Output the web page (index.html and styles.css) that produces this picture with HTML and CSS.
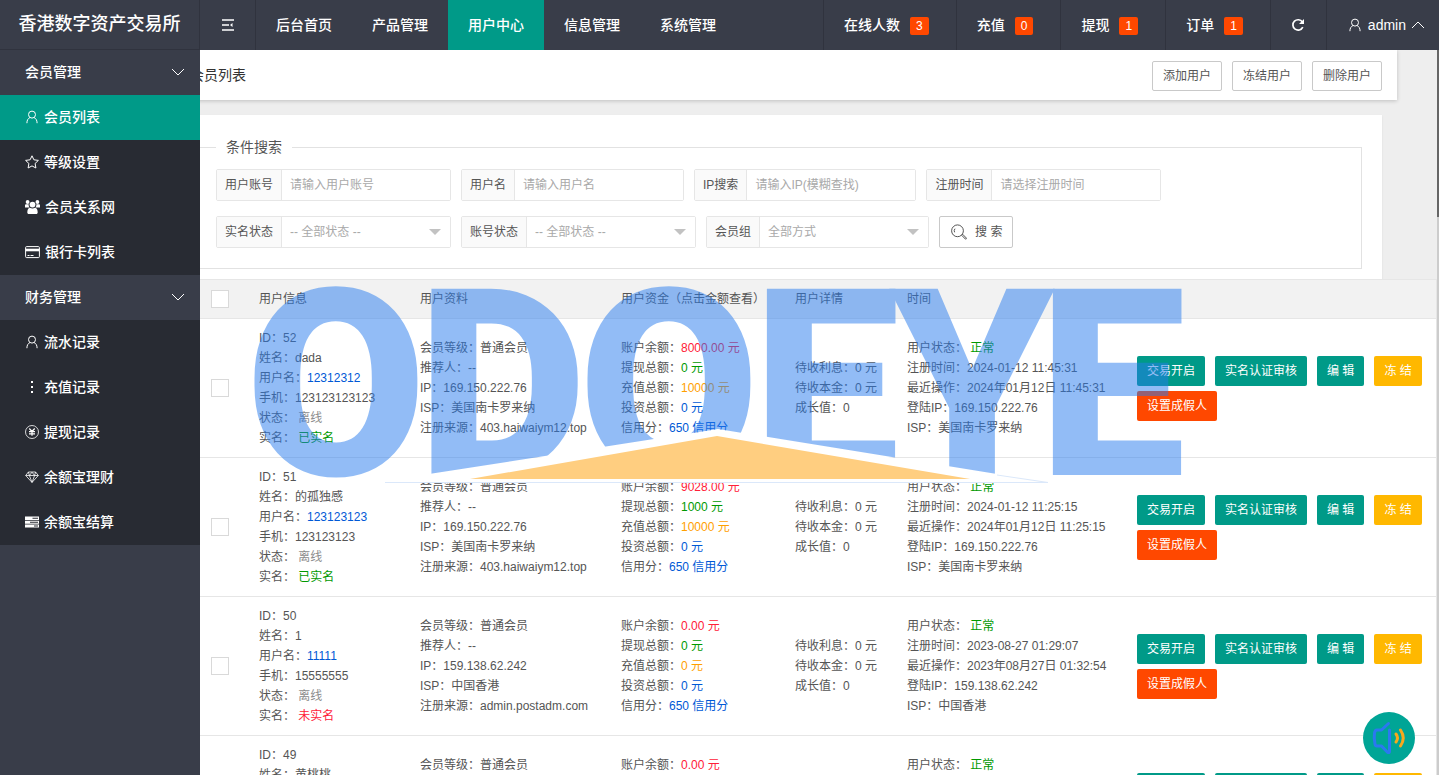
FILE: index.html
```html
<!DOCTYPE html>
<html lang="zh-CN">
<head>
<meta charset="utf-8">
<title>会员列表</title>
<link rel="stylesheet" href="styles.css">
</head>
<body>
<div class="app">
  <header class="topbar">
    <div class="brand">香港数字资产交易所</div>
    <button class="fold" type="button" aria-label="折叠菜单">
      <svg class="icon" width="14" height="14" viewBox="0 0 14 14"><path d="M1 2h12M1 7h7M1 12h12" stroke-width="1.400"/><path d="M9 7l2.500-2v4z" fill="currentColor" stroke="none"/></svg>
    </button>
    <nav class="mainnav">
      <a href="#">后台首页</a><a href="#">产品管理</a><a href="#" class="on">用户中心</a><a href="#">信息管理</a><a href="#">系统管理</a>
    </nav>
    <nav class="stats">
      <a href="#">在线人数<span class="badge">3</span></a>
      <a href="#">充值<span class="badge">0</span></a>
      <a href="#">提现<span class="badge">1</span></a>
      <a href="#">订单<span class="badge">1</span></a>
      <button class="refresh" type="button" aria-label="刷新">
        <svg class="icon" width="14" height="14" viewBox="0 0 14 14"><path d="M11.8 9.2A5.2 5.2 0 1 1 11.4 4" stroke-width="1.7"/><path d="M13 1v5H8z" fill="currentColor" stroke="none"/></svg>
      </button>
      <button class="account" type="button">
        <svg class="icon" width="14" height="14" viewBox="0 0 14 14"><circle cx="7" cy="4.6" r="3.5"/><path d="M1.9 13.2c0-3 1.2-4.800 3-5.600M12.100 13.200c0-3-1.200-4.800-3-5.600"/></svg>
        <span>admin</span>
        <svg class="icon" width="12" height="8" viewBox="0 0 12 8"><path d="M0 7l6-6 6 6"/></svg>
      </button>
    </nav>
  </header>

  <div class="body">
    <aside class="side">
      <button class="group" type="button">会员管理<svg class="icon" width="12" height="8" viewBox="0 0 12 8"><path d="M0 1l6 6 6-6"/></svg></button>
      <ul class="menu">
        <li><a href="#" class="on"><svg class="icon" width="14" height="14" viewBox="0 0 14 14"><circle cx="7" cy="4.600" r="3.500"/><path d="M1.900 13.200c0-3 1.200-4.800 3-5.600M12.100 13.200c0-3-1.200-4.800-3-5.600"/></svg>会员列表</a></li>
        <li><a href="#"><svg class="icon" width="14" height="14" viewBox="0 0 14 14"><path d="M7 .8l1.900 4 4.500.6-3.300 3.100.8 4.500L7 10.900 3.100 13l.8-4.500L.6 5.400l4.500-.6z"/></svg>等级设置</a></li>
        <li><a href="#"><svg class="icon solid" width="15" height="14" viewBox="0 0 15 14"><circle cx="2.600" cy="2" r="1.900"/><circle cx="12.400" cy="2" r="1.900"/><circle cx="7.500" cy="4.600" r="2.900"/><path d="M0 7.500V5.200q0-1 1-1h2.600q-.2 2 .9 3.300zM15 7.500V5.200q0-1-1-1h-2.600q.2 2-.9 3.300zM2.300 12.500c0-2.800.8-4.600 2.600-4.800 1.600 1 3.600 1 5.200 0 1.800.2 2.600 2 2.600 4.800 0 .9-.6 1.500-1.500 1.500H3.800c-.9 0-1.500-.6-1.500-1.500z"/></svg>会员关系网</a></li>
        <li><a href="#"><svg class="icon" width="15" height="14" viewBox="0 0 15 14"><rect x=".6" y="1.600" width="13.800" height="11" rx="1"/><path d="M.6 5h13.800" stroke-width="2.600"/><path d="M2.500 10.500h2M5.500 10.500h3"/></svg>银行卡列表</a></li>
      </ul>
      <button class="group" type="button">财务管理<svg class="icon" width="12" height="8" viewBox="0 0 12 8"><path d="M0 1l6 6 6-6"/></svg></button>
      <ul class="menu">
        <li><a href="#"><svg class="icon" width="14" height="14" viewBox="0 0 14 14"><circle cx="7" cy="4.600" r="3.500"/><path d="M1.900 13.200c0-3 1.200-4.800 3-5.600M12.100 13.200c0-3-1.200-4.800-3-5.600"/></svg>流水记录</a></li>
        <li><a href="#"><svg class="icon solid" width="14" height="14" viewBox="0 0 14 14"><path d="M6 1h2v2H6zM6 6h2v2H6zM6 11h2v2H6z"/></svg>充值记录</a></li>
        <li><a href="#"><svg class="icon thin" width="14" height="14" viewBox="0 0 14 14"><circle cx="7" cy="7" r="6.500"/><path d="M4.300 3.500L7 6.500l2.700-3M7 6.500v4.300M4 6.700h6M4 8.800h6" stroke-width="1.200"/></svg>提现记录</a></li>
        <li><a href="#"><svg class="icon thin" width="14" height="14" viewBox="0 0 14 14"><path d="M3.400 2h7.200L13.300 5.500 7 12.400.7 5.500zM.7 5.500h12.600M3.400 2l1 3.500L7 12.400l2.600-6.900 1-3.500M4.400 5.500L7 2.200l2.600 3.300"/></svg>余额宝理财</a></li>
        <li><a href="#"><svg class="icon solid" width="14" height="14" viewBox="0 0 14 14"><path fill-rule="evenodd" d="M0 1.500h14V5H0zM7.500 2.700v1H13v-1zM0 5.700h14v3H0zM5 6.700v1h8v-1zM0 9.400h14v3.100H0zM9 10.500v1h4v-1z"/></svg>余额宝结算</a></li>
      </ul>
    </aside>

    <main class="frame">
      <div class="page">
        <div class="titlebar">
          <h1>会员列表</h1>
          <div class="actions">
            <button class="btn plain" type="button">添加用户</button>
            <button class="btn plain" type="button">冻结用户</button>
            <button class="btn plain" type="button">删除用户</button>
          </div>
        </div>

        <section class="card">
          <fieldset class="search">
            <legend>条件搜索</legend>
            <div class="fields">
              <div class="field"><label for="acc">用户账号</label><input id="acc" type="text" placeholder="请输入用户账号"></div>
              <div class="field"><label for="name">用户名</label><input id="name" type="text" placeholder="请输入用户名"></div>
              <div class="field"><label for="ip">IP搜索</label><input id="ip" type="text" placeholder="请输入IP(模糊查找)"></div>
              <div class="field"><label for="time">注册时间</label><input id="time" type="text" placeholder="请选择注册时间"></div>
            </div>
            <div class="fields">
              <div class="field drop"><label for="real">实名状态</label><select id="real"><option>-- 全部状态 --</option></select></div>
              <div class="field drop"><label for="state">账号状态</label><select id="state"><option>-- 全部状态 --</option></select></div>
              <div class="field drop"><label for="team">会员组</label><select id="team"><option>全部方式</option></select></div>
              <button class="btn plain find" type="button"><svg class="icon" width="16" height="16" viewBox="0 0 16 16"><circle cx="6.500" cy="6.800" r="5.900"/><path d="M3.600 8.300a3.300 3.300 0 0 1 .4-3.600"/><path d="M10.700 11.300l1-1 3.600 3.700q.3 1-.8 1.200z"/></svg>搜 索</button>
            </div>
          </fieldset>
        </section>

        <table class="list">
          <colgroup><col class="c0"><col class="c1"><col class="c2"><col class="c3"><col class="c4"><col class="c5"><col></colgroup>
          <thead>
            <tr><th><input type="checkbox" aria-label="全选"></th><th>用户信息</th><th>用户资料</th><th>用户资金（点击金额查看）</th><th>用户详情</th><th>时间</th><th></th></tr>
          </thead>
          <tbody>
            <tr>
              <td><input type="checkbox" aria-label="选择 52"></td>
              <td><p>ID：52</p><p>姓名：dada</p><p>用户名：<a href="#">12312312</a></p><p>手机：123123123123</p><p>状态： <span class="gray">离线</span></p><p>实名： <span class="green">已实名</span></p></td>
              <td><p>会员等级：普通会员</p><p>推荐人：--</p><p>IP：169.150.222.76</p><p>ISP：美国南卡罗来纳</p><p>注册来源：403.haiwaiym12.top</p></td>
              <td><p>账户余额：<span class="red">8000.00 元</span></p><p>提现总额：<span class="green">0 元</span></p><p>充值总额：<span class="orange">10000 元</span></p><p>投资总额：<span class="blue">0 元</span></p><p>信用分：<span class="blue">650 信用分</span></p></td>
              <td><p>待收利息：0 元</p><p>待收本金：0 元</p><p>成长值：0</p></td>
              <td><p>用户状态： <span class="green">正常</span></p><p>注册时间：2024-01-12 11:45:31</p><p>最近操作：2024年01月12日 11:45:31</p><p>登陆IP：169.150.222.76</p><p>ISP：美国南卡罗来纳</p></td>
              <td><div class="ops"><button class="btn" type="button">交易开启</button><button class="btn" type="button">实名认证审核</button><button class="btn" type="button">编 辑</button><button class="btn warm" type="button">冻 结</button><button class="btn danger" type="button">设置成假人</button></div></td>
            </tr>
            <tr>
              <td><input type="checkbox" aria-label="选择 51"></td>
              <td><p>ID：51</p><p>姓名：的孤独感</p><p>用户名：<a href="#">123123123</a></p><p>手机：123123123</p><p>状态： <span class="gray">离线</span></p><p>实名： <span class="green">已实名</span></p></td>
              <td><p>会员等级：普通会员</p><p>推荐人：--</p><p>IP：169.150.222.76</p><p>ISP：美国南卡罗来纳</p><p>注册来源：403.haiwaiym12.top</p></td>
              <td><p>账户余额：<span class="red">9028.00 元</span></p><p>提现总额：<span class="green">1000 元</span></p><p>充值总额：<span class="orange">10000 元</span></p><p>投资总额：<span class="blue">0 元</span></p><p>信用分：<span class="blue">650 信用分</span></p></td>
              <td><p>待收利息：0 元</p><p>待收本金：0 元</p><p>成长值：0</p></td>
              <td><p>用户状态： <span class="green">正常</span></p><p>注册时间：2024-01-12 11:25:15</p><p>最近操作：2024年01月12日 11:25:15</p><p>登陆IP：169.150.222.76</p><p>ISP：美国南卡罗来纳</p></td>
              <td><div class="ops"><button class="btn" type="button">交易开启</button><button class="btn" type="button">实名认证审核</button><button class="btn" type="button">编 辑</button><button class="btn warm" type="button">冻 结</button><button class="btn danger" type="button">设置成假人</button></div></td>
            </tr>
            <tr>
              <td><input type="checkbox" aria-label="选择 50"></td>
              <td><p>ID：50</p><p>姓名：1</p><p>用户名：<a href="#">11111</a></p><p>手机：15555555</p><p>状态： <span class="gray">离线</span></p><p>实名： <span class="red">未实名</span></p></td>
              <td><p>会员等级：普通会员</p><p>推荐人：--</p><p>IP：159.138.62.242</p><p>ISP：中国香港</p><p>注册来源：admin.postadm.com</p></td>
              <td><p>账户余额：<span class="red">0.00 元</span></p><p>提现总额：<span class="green">0 元</span></p><p>充值总额：<span class="orange">0 元</span></p><p>投资总额：<span class="blue">0 元</span></p><p>信用分：<span class="blue">650 信用分</span></p></td>
              <td><p>待收利息：0 元</p><p>待收本金：0 元</p><p>成长值：0</p></td>
              <td><p>用户状态： <span class="green">正常</span></p><p>注册时间：2023-08-27 01:29:07</p><p>最近操作：2023年08月27日 01:32:54</p><p>登陆IP：159.138.62.242</p><p>ISP：中国香港</p></td>
              <td><div class="ops"><button class="btn" type="button">交易开启</button><button class="btn" type="button">实名认证审核</button><button class="btn" type="button">编 辑</button><button class="btn warm" type="button">冻 结</button><button class="btn danger" type="button">设置成假人</button></div></td>
            </tr>
            <tr>
              <td><input type="checkbox" aria-label="选择 49"></td>
              <td><p>ID：49</p><p>姓名：黄桃桃</p><p>用户名：--</p><p>手机：--</p><p>状态：--</p><p>实名：--</p></td>
              <td><p>会员等级：普通会员</p><p>推荐人：--</p><p>IP：--</p><p>ISP：--</p><p>注册来源：--</p></td>
              <td><p>账户余额：<span class="red">0.00 元</span></p><p>提现总额：--</p><p>充值总额：--</p><p>投资总额：--</p><p>信用分：--</p></td>
              <td><p>待收利息：--</p><p>待收本金：--</p><p>成长值：--</p></td>
              <td><p>用户状态： <span class="green">正常</span></p><p>注册时间：--</p><p>最近操作：--</p><p>登陆IP：--</p><p>ISP：--</p></td>
              <td><div class="ops"><button class="btn" type="button">交易开启</button><button class="btn" type="button">实名认证审核</button><button class="btn" type="button">编 辑</button><button class="btn warm" type="button">冻 结</button><button class="btn danger" type="button">设置成假人</button></div></td>
            </tr>
          </tbody>
        </table>
      </div>

      <svg class="watermark" width="940" height="210" viewBox="250 280 940 210" aria-label="ODOEYE">
        <defs><clipPath id="roofline"><path d="M250 280H1190V490H1049L997 474 718 429 429 474 420 490H250z"/></clipPath></defs>
        <path d="M429 475L718 429 997 475 1048 482H385z" fill="#fff"/>
        <path d="M385 482.500H1048L997 475" fill="none" stroke="#dbe8fa"/>
        <path d="M470 479L717 436 970 479z" fill="#ffce80"/>
        <g opacity=".5" clip-path="url(#roofline)">
          <text class="mark" y="475" x="336 502 669 826 972 1112">ODOEYE</text>
        </g>
      </svg>
    </main>
    <div class="scroll"><div class="thumb"></div></div>
  </div>

  <button class="sound" type="button" aria-label="提示音">
    <svg width="34" height="34" viewBox="0 0 34 34" fill="none" stroke-width="3" stroke-linecap="round" stroke-linejoin="round"><path d="M16.500 2.500L9.500 9H5q-2 0-2.500 3-.8 5 .5 11 .3 2 2 2h4.500l6 6.200q2 1.200 2-1V9" stroke="#2b78f0"/><path d="M24 13q3 4 0 8" stroke="#f8a81c"/><path d="M28.500 9q5.500 8 0 16" stroke="#f8a81c"/></svg>
  </button>
</div>
</body>
</html>
```
FILE: styles.css
```css
* { box-sizing: border-box; }
body, h1, p, ul { margin: 0; padding: 0; }
ul { list-style: none; }
a { text-decoration: none; color: inherit; }
button, input, select { font: inherit; color: inherit; margin: 0; }
button { border: 0; background: none; padding: 0; cursor: pointer; }

body {
  font: 14px/20px "Liberation Sans", "Noto Sans CJK SC", sans-serif;
  color: #555;
  overflow: hidden;
}
.icon { fill: none; stroke: currentColor; flex: none; }
.icon.solid { fill: currentColor; stroke: none; }
.icon.thin { stroke-width: .8; }

.app { height: 100vh; display: flex; flex-direction: column; }

.topbar {
  display: flex;
  flex: none;
  height: 50px;
  background: #393d49;
  color: #fff;
  font-weight: 500;
}
.brand {
  width: 200px;
  text-align: center;
  font-size: 18px;
  line-height: 49px;
  border-right: 1px solid #30333e;
  border-bottom: 1px solid #30333e;
}
.fold { width: 56px; border-right: 1px solid #30333e; }
.fold svg, .refresh svg { display: block; margin: auto; }
.mainnav { display: flex; flex: 1; }
.mainnav a { padding: 0 20px; line-height: 50px; }
.mainnav .on { background: #009a88; }
.stats { display: flex; }
.stats a {
  display: flex;
  align-items: center;
  gap: 10px;
  padding: 0 27px 0 20px;
  border-left: 1px solid #30333e;
}
.badge {
  padding: 0 6px;
  margin-top: 2px;
  font-size: 12px;
  line-height: 18px;
  background: #ff4800;
  border-radius: 2px;
}
.refresh { width: 56px; border-left: 1px solid #30333e; }
.account {
  display: flex;
  align-items: center;
  gap: 6px;
  padding: 0 15px 0 21px;
  border-left: 1px solid #30333e;
}

.body { flex: 1; min-height: 0; display: flex; }
.side { width: 200px; flex: none; background: #393d49; color: #fff; font-weight: 500; }
.group {
  display: flex;
  align-items: center;
  justify-content: space-between;
  width: 100%;
  height: 45px;
  padding: 0 16px 2px 25px;
}
.menu { background: #282b33; }
.menu a { display: flex; align-items: center; gap: 5px; height: 45px; padding: 0 0 2px 25px; }
.menu .on { background: #009a88; }

.frame { flex: 1; min-width: 0; overflow: hidden; position: relative; background: #eee; }
.page { margin-left: -25px; }
.titlebar {
  display: flex;
  align-items: center;
  justify-content: space-between;
  height: 50px;
  margin-right: 40px;
  padding: 0 15px;
  background: #fff;
  box-shadow: 0 1px 4px rgba(0, 0, 0, .2);
}
h1 { font-size: 14px; font-weight: 400; color: #333; }
.actions { display: flex; gap: 10px; padding-top: 2px; }

.btn {
  height: 30px;
  padding: 0 10px;
  font-size: 12px;
  line-height: 28px;
  color: #fff;
  background: #009a88;
  border-radius: 2px;
  white-space: nowrap;
}
.btn.plain { background: #fff; color: #555; border: 1px solid #c9c9c9; }
.btn.warm { background: #ffb800; }
.btn.danger { background: #ff4800; }
.actions .btn { width: 70px; }

.card {
  margin: 15px 55px 0 15px;
  padding: 22px 20px 10px 0;
  background: #fff;
  box-shadow: 0 1px 2px rgba(0, 0, 0, .08);
}
.search {
  min-width: 0;
  margin: 0;
  padding: 12px 0 20px 25px;
  border: 1px solid #e2e2e2;
}
.search legend { padding: 0 10px; }
.fields { display: flex; gap: 10px; font-size: 12px; }
.fields + .fields { margin-top: 15px; }
.field {
  position: relative;
  display: flex;
  height: 32px;
  border: 1px solid #e6e6e6;
  border-radius: 2px;
}
.field label { padding: 0 8px; line-height: 30px; background: #fafafa; }
.field input, .field select {
  width: 169px;
  padding: 0 8px;
  border: 0;
  border-left: 1px solid #e6e6e6;
  background: #fff;
  outline: 0;
}
.field select { appearance: none; color: #a9a9a9; }
.field input::placeholder { color: #a9a9a9; }
.drop::after {
  content: "";
  position: absolute;
  right: 9px;
  top: 12px;
  border: 6px solid transparent;
  border-top-color: #c2c2c2;
  pointer-events: none;
}
.find { display: flex; align-items: center; gap: 8px; height: 32px; padding: 0 10px 0 11px; }

.list {
  width: 100%;
  table-layout: fixed;
  border-collapse: collapse;
  background: #fff;
  font-size: 12px;
  border-right: 1px solid #e6e6e6;
}
.c0 { width: 69px; }
.c1 { width: 161px; }
.c2 { width: 201px; }
.c3 { width: 174px; }
.c4 { width: 112px; }
.c5 { width: 230px; }
.list th {
  height: 39px;
  padding: 0 0 0 15px;
  text-align: left;
  font-weight: 400;
  background: #f2f2f2;
  border-top: 1px solid #e6e6e6;
  border-bottom: 1px solid #e6e6e6;
  white-space: nowrap;
}
.list td { padding: 9px 0 9px 15px; border-bottom: 1px solid #e6e6e6; white-space: nowrap; }
.list th:first-child, .list td:first-child { padding-left: 36px; }
.list input {
  display: block;
  appearance: none;
  width: 18px;
  height: 18px;
  background: #fff;
  border: 1px solid #d9d9d9;
}
.list a, .blue { color: #0059d6; }
.gray { color: #8c8c8c; }
.green { color: #009900; }
.red { color: #ff2038; }
.orange { color: #ffa000; }
.ops { display: flex; flex-wrap: wrap; gap: 5px 10px; }

.watermark { position: absolute; left: 50px; top: 230px; pointer-events: none; }
.mark {
  font-family: Roboto, sans-serif;
  font-size: 262px;
  font-weight: 900;
  text-anchor: middle;
  fill: #277bed;
}

.scroll { width: 2px; flex: none; background: #ccc; }
.thumb { height: 167px; background: #666; }

.sound {
  position: fixed;
  right: 24px;
  bottom: 11px;
  display: flex;
  align-items: center;
  justify-content: center;
  width: 52px;
  height: 52px;
  border-radius: 50%;
  background: #00a596;
}
```
